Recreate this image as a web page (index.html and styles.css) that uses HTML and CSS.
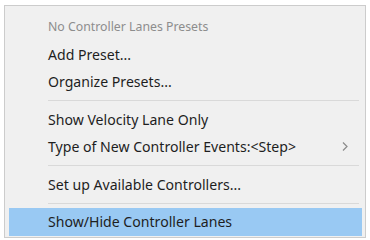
FILE: index.html
```html
<!DOCTYPE html>
<html>
<head>
<meta charset="utf-8">
<link rel="stylesheet" href="styles.css">
</head>
<body>
<div class="menu">
  <div class="item disabled">No Controller Lanes Presets</div>
  <div class="item">Add Preset...</div>
  <div class="item">Organize Presets...</div>
  <div class="sep"></div>
  <div class="item">Show Velocity Lane Only</div>
  <div class="item has-sub">Type of New Controller Events:&lt;Step&gt;
    <svg class="chev" width="6" height="9" viewBox="0 0 6 9"><path d="M1 0.5 L5 4.5 L1 8.5" fill="none" stroke="#8a8a8a" stroke-width="1.2"/></svg>
  </div>
  <div class="sep"></div>
  <div class="item">Set up Available Controllers...</div>
  <div class="sep"></div>
  <div class="item selected">Show/Hide Controller Lanes</div>
</div>
</body>
</html>
```
FILE: styles.css
```css
html, body {
  margin: 0;
  padding: 0;
  background: #ffffff;
}
body {
  padding: 5px 4px 2px 4px;
  font-family: "Noto Sans", "Open Sans", sans-serif;
  font-size: 14.1px;
  color: #1e1e1e;
}
.menu {
  width: 362px;
  box-sizing: border-box;
  background: #f0f0f0;
  border: 1px solid #cccccc;
  padding: 7px 3px 1px 4px;
  display: flex;
  flex-direction: column;
}
.item {
  height: 27.5px;
  display: flex;
  align-items: center;
  padding-left: 39px;
  padding-right: 14px;
  white-space: nowrap;
}
.item.disabled {
  color: #8d8d8d;
  font-size: 12.3px;
}
.item.selected {
  background: #99c9f3;
}
.has-sub {
  justify-content: space-between;
}
.chev {
  display: block;
}
.sep {
  height: 10px;
  display: flex;
  align-items: center;
  padding-left: 39px;
  padding-right: 3px;
}
.sep::before {
  content: "";
  flex: 1;
  height: 1px;
  background: #d9d9d9;
}
```
